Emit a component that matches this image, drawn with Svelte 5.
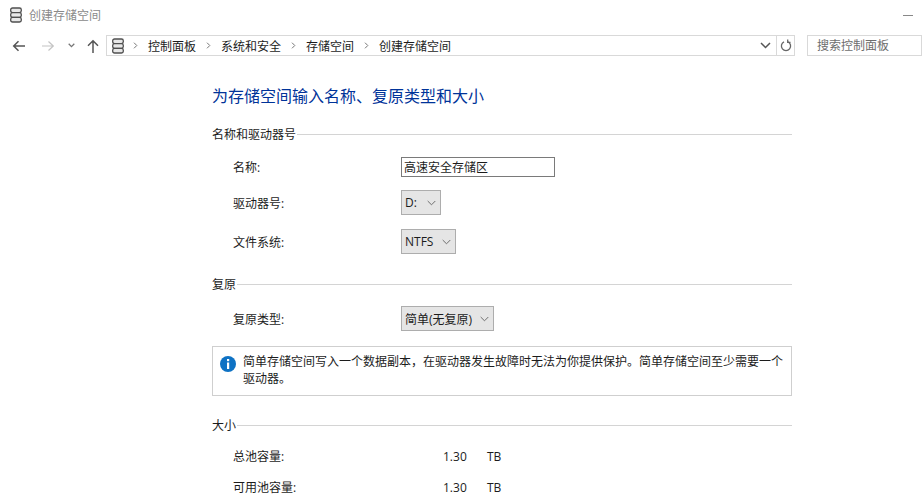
<script>
  const crumbs = ['控制面板', '系统和安全', '存储空间', '创建存储空间']
</script>

{#snippet drive()}
  <svg width="12" height="16" viewBox="0 0 12 16" fill="#e8e8e8" stroke="#4f4f4f" stroke-width="1.300">
    <rect x=".7" y="1" width="10.600" height="4.600" rx="1.800" />
    <rect x=".7" y="5.700" width="10.600" height="4.600" rx="1.800" />
    <rect x=".7" y="10.400" width="10.600" height="4.600" rx="1.800" />
  </svg>
{/snippet}

{#snippet chevron()}
  <svg class="chev" width="9" height="6" viewBox="0 0 9 6" fill="none" stroke="#6e6e6e" stroke-width="1">
    <path d="M.7 1l3.800 3.800L8.300 1" />
  </svg>
{/snippet}

<div class="window">
  <header class="titlebar">
    {@render drive()}
    <span class="title">创建存储空间</span>
    <span class="minimize"></span>
  </header>

  <nav class="toolbar">
    <div class="navbtns">
      <svg width="14" height="12" viewBox="0 0 14 12" fill="none" stroke="#555" stroke-width="1.500"><path d="M13 6H2M6.500 1.200L1.700 6l4.800 4.800" /></svg>
      <svg class="off" width="14" height="12" viewBox="0 0 14 12" fill="none" stroke="#c4c4c4" stroke-width="1.200"><path d="M1 6h11M7.500 1.500L12.300 6l-4.800 4.500" /></svg>
      <svg class="down" width="7" height="5" viewBox="0 0 7 5" fill="none" stroke="#777" stroke-width="1.300"><path d="M.7.800l2.800 2.800L6.300.8" /></svg>
      <svg class="up" width="12" height="14" viewBox="0 0 12 14" fill="none" stroke="#555" stroke-width="1.500"><path d="M6 14V2M1 6.800l5-5 5 5" /></svg>
    </div>
    <div class="address">
      <div class="path">
        {@render drive()}
        {#each crumbs as c, i}
          <svg class="sep" class:first={i === 0} width="5" height="7" viewBox="0 0 5 7" fill="none" stroke="#777" stroke-width="1"><path d="M1 .7l2.800 2.800L1 6.300" /></svg>
          <span>{c}</span>
        {/each}
      </div>
      <div class="addr-end">
        <svg width="11" height="7" viewBox="0 0 11 7" fill="none" stroke="#555" stroke-width="1.500"><path d="M1 1l4.500 4.500L10 1" /></svg>
      </div>
      <div class="refresh">
        <svg width="12" height="13" viewBox="0 0 12 13" fill="none" stroke="#666" stroke-width="1.300"><path d="M4 2.800a4.600 4.600 0 1 0 4 0" /><path d="M7.700.6v2.800h2.800" /></svg>
      </div>
    </div>
    <div class="search">搜索控制面板</div>
  </nav>

  <main class="content">
    <h1>为存储空间输入名称、复原类型和大小</h1>

    <div class="group-head first"><span>名称和驱动器号</span><i></i></div>
    <div class="row r-name">
      <label for="name">名称:</label>
      <input id="name" value="高速安全存储区" />
    </div>
    <div class="row r-drive">
      <span class="lbl">驱动器号:</span>
      <div class="combo"><span>D:</span>{@render chevron()}</div>
    </div>
    <div class="row r-fs">
      <span class="lbl">文件系统:</span>
      <div class="combo"><span>NTFS</span>{@render chevron()}</div>
    </div>

    <div class="group-head second"><span>复原</span><i></i></div>
    <div class="row r-type">
      <span class="lbl">复原类型:</span>
      <div class="combo"><span>简单(无复原)</span>{@render chevron()}</div>
    </div>
    <div class="info">
      <svg width="16" height="16" viewBox="0 0 16 16">
        <circle cx="8" cy="8" r="8" fill="#0e72c4" />
        <rect x="7" y="3" width="2.200" height="2.200" fill="#fff" />
        <rect x="7" y="6.500" width="2.200" height="6.500" fill="#fff" />
      </svg>
      <p>简单存储空间写入一个数据副本，在驱动器发生故障时无法为你提供保护。简单存储空间至少需要一个驱动器。</p>
    </div>

    <div class="group-head third"><span>大小</span><i></i></div>
    <div class="row r-total">
      <span class="lbl">总池容量:</span>
      <span class="num">1.30</span><span class="unit">TB</span>
    </div>
    <div class="row r-avail">
      <span class="lbl">可用池容量:</span>
      <span class="num">1.30</span><span class="unit">TB</span>
    </div>
  </main>
</div>

<style>
  :global(body) {
    margin: 0;
    background: #fff;
    overflow: hidden;
  }
  .window {
    width: 922px;
    height: 504px;
    overflow: hidden;
    background: #fff;
    color: #1c1c1c;
    font-family: "Open Sans", "Noto Sans CJK SC", sans-serif;
    font-size: 12px;
  }
  .titlebar {
    display: flex;
    align-items: center;
    height: 30px;
    padding-left: 10px;
    gap: 7px;
  }
  .title {
    color: #8a8a8a;
  }
  .minimize {
    width: 10px;
    height: 1px;
    background: #888;
    margin-left: auto;
    margin-right: 9px;
  }
  .toolbar {
    display: flex;
    align-items: center;
    height: 21px;
    margin-top: 5px;
  }
  .navbtns {
    display: flex;
    align-items: center;
    width: 106px;
    padding-left: 12px;
    box-sizing: border-box;
  }
  .navbtns .off {
    margin-left: 15px;
  }
  .navbtns .down {
    margin-left: 13px;
  }
  .navbtns .up {
    margin-left: 12px;
  }
  .address {
    display: flex;
    align-items: center;
    width: 689px;
    height: 21px;
    box-sizing: border-box;
    border: 1px solid #d9d9d9;
  }
  .path {
    display: flex;
    align-items: center;
    flex: 1;
    padding-left: 5px;
  }
  .sep {
    margin: 0 10px;
  }
  .sep.first {
    margin-left: 9px;
  }
  .addr-end {
    display: flex;
    padding-right: 5px;
  }
  .refresh {
    display: flex;
    align-items: center;
    justify-content: center;
    width: 17px;
    height: 100%;
    border-left: 1px solid #d9d9d9;
  }
  .search {
    width: 115px;
    height: 21px;
    box-sizing: border-box;
    margin-left: 12px;
    padding-left: 9px;
    line-height: 19px;
    border: 1px solid #d9d9d9;
    color: #6d6d6d;
    flex-shrink: 0;
  }
  .content {
    width: 580px;
    margin-left: 212px;
  }
  h1 {
    margin: 29px 0 0;
    height: 22px;
    line-height: 22px;
    font-size: 16px;
    font-weight: 400;
    color: #003399;
  }
  .group-head {
    display: flex;
    align-items: center;
    height: 18px;
  }
  .group-head i {
    flex: 1;
    height: 1px;
    background: #d4d4d4;
    margin-left: 1px;
  }
  .group-head.first { margin-top: 18px; }
  .group-head.second { margin-top: 21px; }
  .group-head.third { margin-top: 20px; }
  .row {
    display: flex;
    align-items: center;
    padding-left: 21px;
  }
  .row label,
  .lbl {
    width: 168px;
  }
  .r-name { margin-top: 14px; }
  .r-drive { margin-top: 13px; }
  .r-fs { margin-top: 14px; }
  .r-type { margin-top: 13px; }
  .r-total { margin-top: 13px; }
  .r-avail { margin-top: 13px; }
  input {
    width: 154px;
    height: 20px;
    box-sizing: border-box;
    padding: 0 2px;
    border: 1px solid #7a7a7a;
    border-radius: 0;
    font: inherit;
    color: inherit;
    outline: none;
  }
  .combo {
    display: flex;
    align-items: center;
    justify-content: space-between;
    height: 25px;
    box-sizing: border-box;
    padding: 0 4px 0 3px;
    background: #e5e5e5;
    border: 1px solid #adadad;
  }
  .r-drive .combo { width: 40px; }
  .r-fs .combo { width: 55px; }
  .r-type .combo { width: 93px; }
  .info {
    display: flex;
    align-items: flex-start;
    gap: 7px;
    height: 50px;
    box-sizing: border-box;
    margin-top: 15px;
    padding: 6px 6px 0 7px;
    border: 1px solid #cfcfcf;
  }
  .info svg {
    flex-shrink: 0;
    margin-top: 3px;
  }
  .info p {
    margin: 0;
    line-height: 17px;
  }
  .num {
    width: 44px;
    margin-left: 42px;
    box-sizing: border-box;
  }
</style>
